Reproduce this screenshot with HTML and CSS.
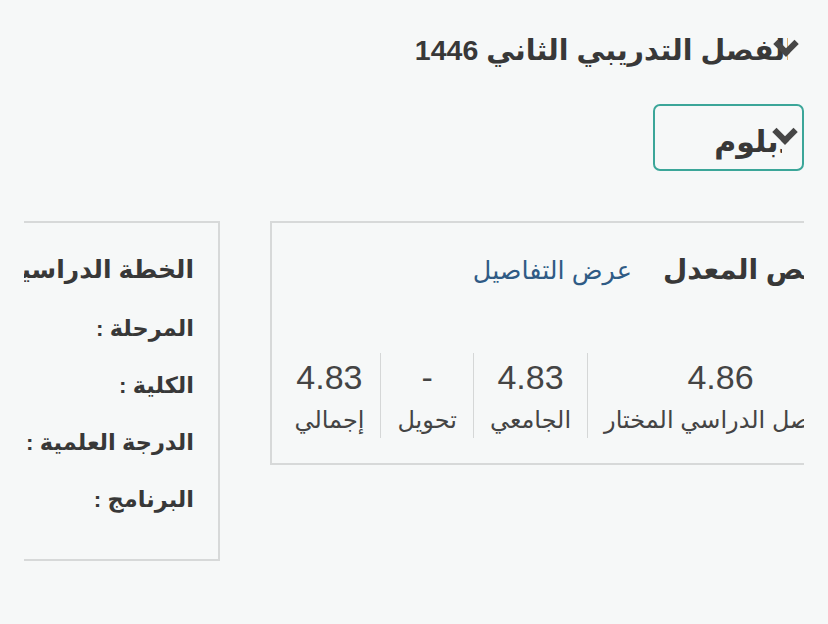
FILE: index.html
```html
<!DOCTYPE html>
<html lang="ar" dir="rtl">
<head>
<meta charset="utf-8">
<title>الخطة الدراسية</title>
<link rel="stylesheet" href="styles.css">
</head>
<body>
<div class="page">
  <div class="term">
    <span class="term-title">الفصل التدريبي الثاني 1446</span>
    <span class="chev chev-term" aria-hidden="true"></span>
  </div>

  <div class="degree">
    <span class="degree-text">دبلوم</span>
    <span class="chev chev-degree" aria-hidden="true"></span>
  </div>

  <div class="cards-viewport">
    <div class="cards-track">
      <section class="card card-gpa">
        <div class="card-head">
          <h2 class="card-title">ملخص المعدل</h2>
          <a class="details-link" href="#">عرض التفاصيل</a>
        </div>
        <div class="stats">
          <div class="stat">
            <div class="stat-value">4.86</div>
            <div class="stat-label">الفصل الدراسي المختار</div>
          </div>
          <div class="stat">
            <div class="stat-value">4.83</div>
            <div class="stat-label">الجامعي</div>
          </div>
          <div class="stat">
            <div class="stat-value">-</div>
            <div class="stat-label">تحويل</div>
          </div>
          <div class="stat">
            <div class="stat-value">4.83</div>
            <div class="stat-label">إجمالي</div>
          </div>
        </div>
      </section>

      <section class="card card-plan">
        <h2 class="card-title plan-title">الخطة الدراسية</h2>
        <ul class="plan-list">
          <li>المرحلة :</li>
          <li>الكلية :</li>
          <li>الدرجة العلمية :</li>
          <li>البرنامج :</li>
        </ul>
      </section>
    </div>
  </div>
</div>
</body>
</html>
```

FILE: styles.css
```css
html, body {
  margin: 0;
  padding: 0;
}

body {
  background: #f6f8f8;
  color: #3b3b3b;
  font-family: "Liberation Sans", "DejaVu Sans", sans-serif;
  direction: rtl;
}

.page {
  padding: 34px 24px 0 24px;
}

.term {
  position: relative;
  display: flex;
  justify-content: flex-start;
  padding-right: 9px;
  height: 32px;
  align-items: center;
}

.term-title {
  font-size: 28.5px;
  font-weight: bold;
  line-height: 32px;
  color: #383838;
  white-space: nowrap;
}

/* chevron-down icon laid over the first letter of the label */
.chev {
  position: absolute;
  background: #f6f8f8;
  z-index: 2;
}

.chev::after {
  content: "";
  position: absolute;
  box-sizing: border-box;
  width: 18px;
  height: 18px;
  border-right: 6.5px solid #464646;
  border-bottom: 6.5px solid #464646;
  transform: rotate(45deg);
}

.chev-term {
  right: 6px;
  top: 2px;
  width: 10px;
  height: 28px;
}

.chev-term::after {
  left: -11px;
  top: -1px;
}

.degree {
  position: relative;
  margin-top: 38px;
  margin-left: calc(100% - 151px);
  width: 151px;
  height: 67px;
  box-sizing: border-box;
  border: 2px solid #3ba699;
  border-radius: 7px;
  display: flex;
  align-items: center;
  padding-right: 8px;
}

.degree-text {
  font-size: 30px;
  font-weight: bold;
  color: #383838;
  line-height: 36px;
  padding-top: 8px;
}

.chev-degree {
  right: 4px;
  top: 14px;
  width: 16px;
  height: 40px;
}

.chev-degree::after {
  left: -6px;
  top: 3px;
}

.cards-viewport {
  margin-top: 50px;
  overflow: hidden;
}

.cards-track {
  display: flex;
  align-items: flex-start;
  gap: 50px;
  margin-right: -67px;
}

.card {
  flex: none;
  box-sizing: border-box;
  border: 2px solid #d7d9d9;
  background: #f6f8f8;
}

.card-gpa {
  width: 601px;
  height: 244px;
  padding: 31px 16px 0 8px;
}

.card-head {
  display: flex;
  align-items: baseline;
  gap: 31px;
}

.card-title {
  margin: 0;
  font-size: 28px;
  font-weight: bold;
  line-height: 32px;
  color: #383838;
  white-space: nowrap;
}

.details-link {
  font-size: 25.5px;
  color: #2f5b85;
  text-decoration: none;
  white-space: nowrap;
}

.stats {
  display: flex;
  margin-top: 67px;
}

.stat {
  padding: 0 16px;
  text-align: center;
  border-left: 1.5px solid #d5d7d7;
  height: 85px;
  box-sizing: border-box;
  white-space: nowrap;
}

.stat:last-child {
  border-left: none;
}

.stat-value {
  font-size: 34px;
  line-height: 36px;
  padding-top: 6px;
  color: #444;
}

.stat-label {
  font-size: 24px;
  line-height: 30px;
  margin-top: 10px;
  color: #444;
}

.card-plan {
  width: 280px;
  height: 340px;
  padding: 30px 24px 0 0;
}

.plan-title {
  font-size: 25px;
}

.plan-list {
  list-style: none;
  margin: 29px 0 0;
  padding: 0;
}

.plan-list li {
  font-size: 22.5px;
  font-weight: bold;
  line-height: 30px;
  margin-bottom: 27px;
  color: #383838;
  white-space: nowrap;
}
```
